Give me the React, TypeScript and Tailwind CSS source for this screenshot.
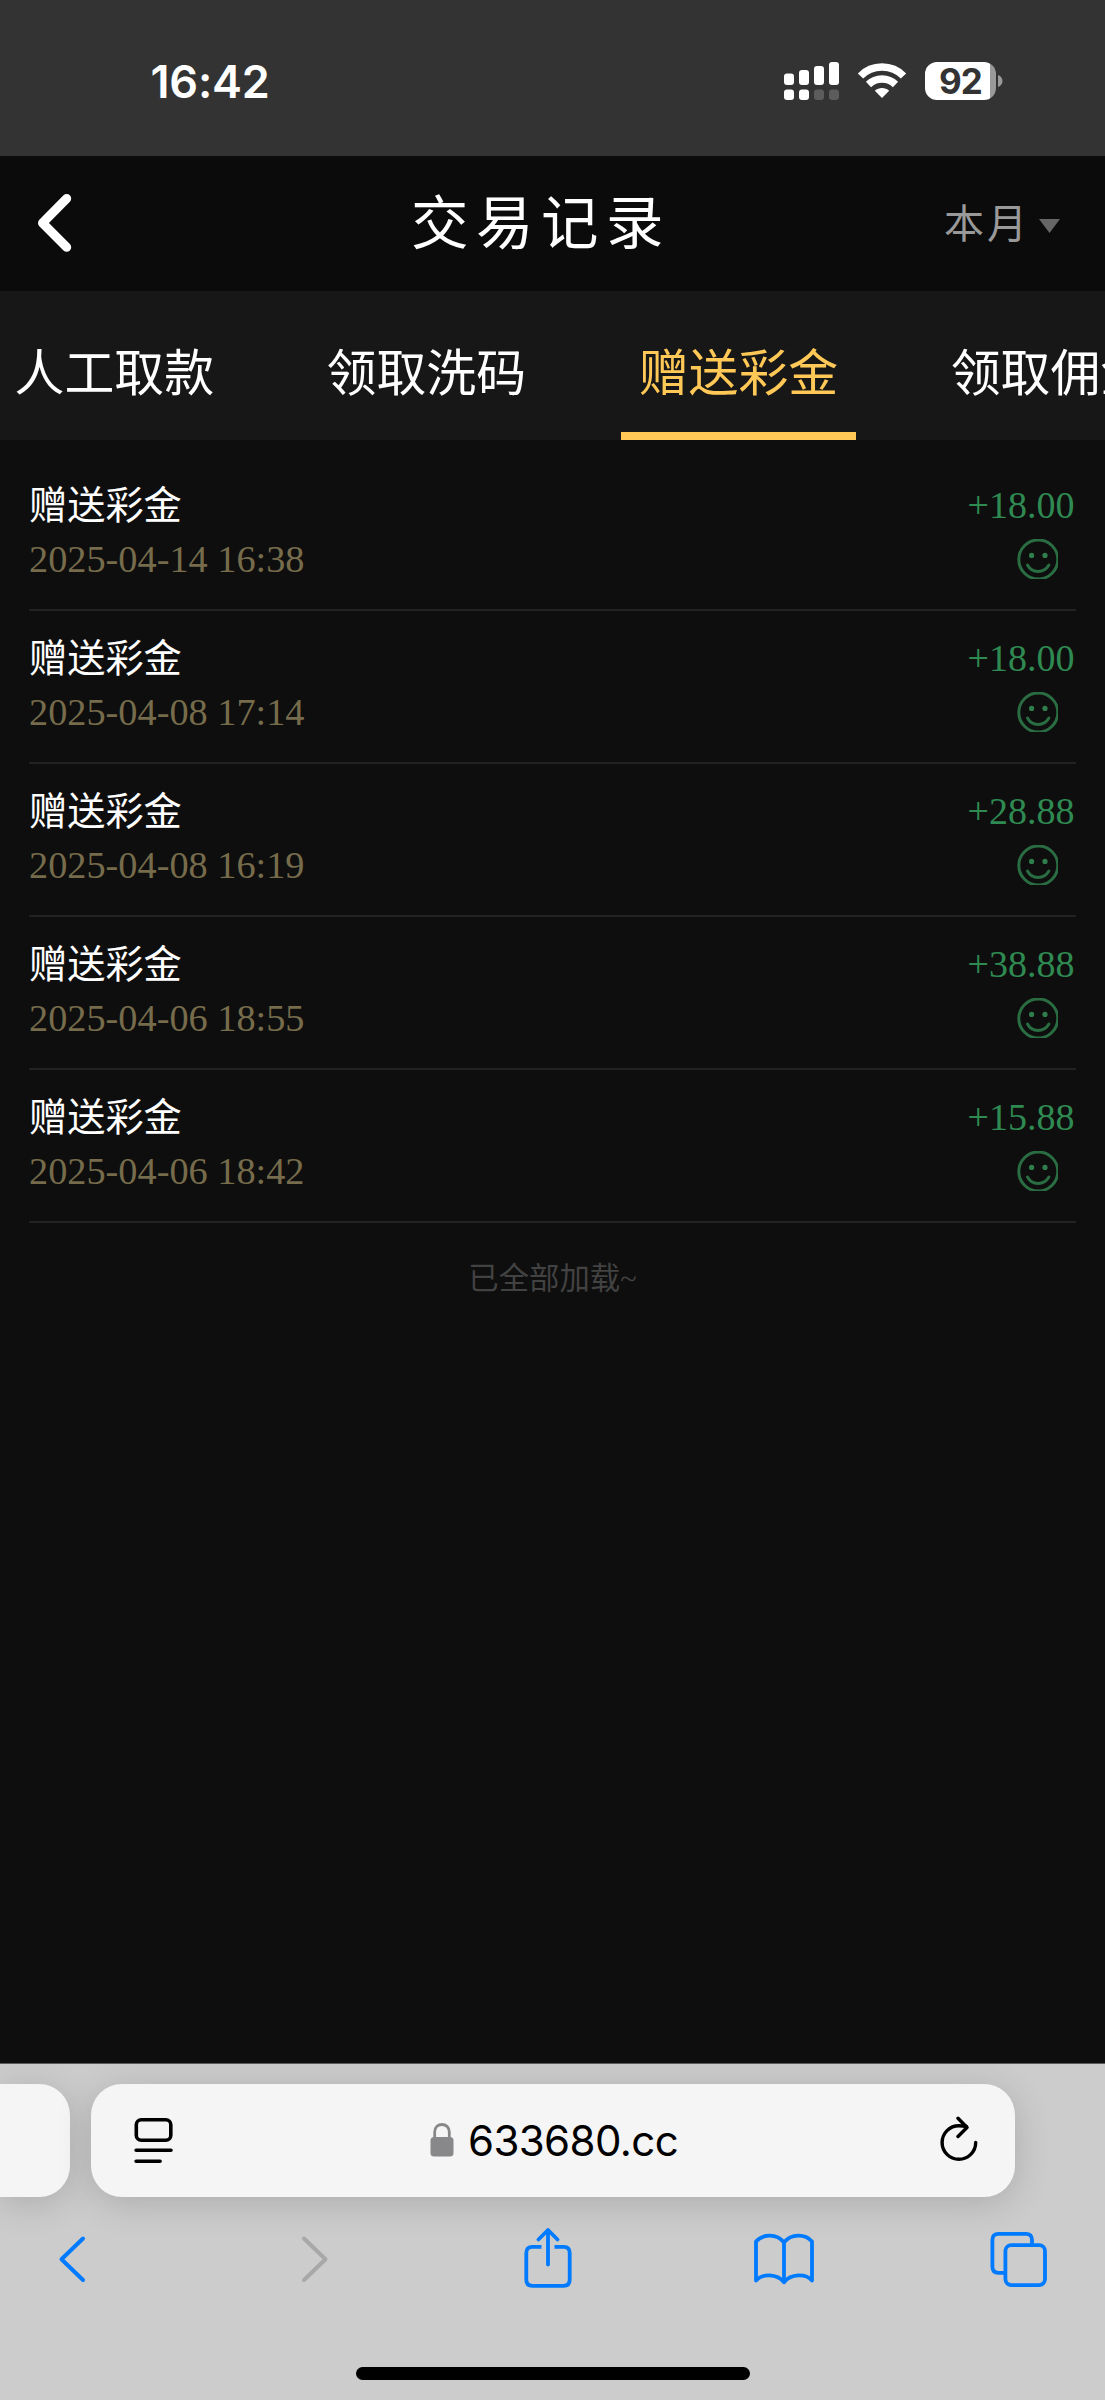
import React from 'react';

interface Transaction {
  title: string;
  time: string;
  amount: string;
}

const transactions: Transaction[] = [
  { title: '赠送彩金', time: '2025-04-14 16:38', amount: '+18.00' },
  { title: '赠送彩金', time: '2025-04-08 17:14', amount: '+18.00' },
  { title: '赠送彩金', time: '2025-04-08 16:19', amount: '+28.88' },
  { title: '赠送彩金', time: '2025-04-06 18:55', amount: '+38.88' },
  { title: '赠送彩金', time: '2025-04-06 18:42', amount: '+15.88' },
];

const tabs = ['人工取款', '领取洗码', '赠送彩金', '领取佣金'];
const activeTab = '赠送彩金';

const StatusBar: React.FC = () => (
  <div className="h-[155.5px] bg-[#333333] flex items-start justify-between pl-[150.5px] pr-[102px] font-['Inter',sans-serif] text-white">
    <div className="mt-[54px] text-[45px] leading-[56px] font-semibold tracking-[-0.2px]">16:42</div>
    <div className="mt-[62px] flex items-start">
      {/* Signal */}
      <svg className="w-[56px] h-[38px]" viewBox="0 0 56 38" fill="white">
        <rect x="0" y="11.5" width="10" height="11.5" rx="3" />
        <rect x="15" y="8" width="10" height="15" rx="3" />
        <rect x="30" y="4" width="10" height="19" rx="3" />
        <rect x="45" y="0" width="10" height="23" rx="3" />
        <rect x="0" y="27.5" width="10" height="10.5" rx="3" />
        <rect x="15" y="27.5" width="10" height="10.5" rx="3" />
        <rect x="30" y="27.5" width="10" height="10.5" rx="3" fill="#5c5c5c" />
        <rect x="45" y="27.5" width="10" height="10.5" rx="3" fill="#5c5c5c" />
      </svg>
      {/* Wifi */}
      <svg className="w-[50px] h-[38px] ml-[17px]" viewBox="0 0 50 38" fill="none" stroke="white" strokeWidth="7.4">
        <path d="M3.5 14C15 2 35 2 46.5 14" />
        <path d="M11.5 22.5C19 15.2 31 15.2 38.5 22.5" />
        <path d="M25 36l-7.2-7.3c4-3.6 10.4-3.6 14.4 0z" fill="white" stroke="none" />
      </svg>
      {/* Battery */}
      <div className="ml-[18px] flex items-center">
        <div className="w-[71px] h-[38px] rounded-[12px] bg-[linear-gradient(90deg,#fff_65px,#9a9a9a_65px)] text-[#333333] text-[35px] leading-[38px] font-bold text-center tracking-[-0.9px]">
          92
        </div>
        <svg className="w-[5px] h-[12px] ml-[2px]" viewBox="0 0 5 12" fill="#9a9a9a">
          <path d="M0 0c6 2 6 10 0 12z" />
        </svg>
      </div>
    </div>
  </div>
);

const Header: React.FC = () => (
  <div className="h-[135.5px] bg-[#0b0b0b] grid grid-cols-[1fr_auto_1fr] items-center">
    <svg className="w-[40px] h-[64px] ml-[35px]" viewBox="0 0 40 64" fill="none" stroke="white" strokeWidth="9" strokeLinecap="round" strokeLinejoin="round">
      <path d="M31.7 7.5L7.5 32l24.2 24.3" />
    </svg>
    <h1 className="text-[57.5px] leading-[80px] tracking-[7.5px] text-white whitespace-nowrap -mt-[8px] pr-[23px]">交易记录</h1>
    <div className="flex items-center justify-self-end pr-[45px]">
      <span className="-mt-[4px] text-[40px] leading-[56px] tracking-[3px] text-[#999999]">本月</span>
      <svg className="w-[21px] h-[14px] ml-[9px] mt-[5px]" viewBox="0 0 21 14" fill="#666666">
        <path d="M0 0h21L10.5 14z" />
      </svg>
    </div>
  </div>
);

const TabBar: React.FC = () => (
  <div className="h-[149px] bg-[#171717] flex pl-[14.5px] gap-[112.5px] overflow-hidden">
    {tabs.map((tab) => (
      <div
        key={tab}
        className={
          tab === activeTab
            ? 'shrink-0 h-full flex justify-center -mx-[18px] px-[18px] text-[#ffc857] border-b-[8.5px] border-[#ffc857]'
            : 'shrink-0 h-full flex justify-center text-white'
        }
      >
        <span className="mt-[42px] text-[49.9px] leading-[72px] whitespace-nowrap">{tab}</span>
      </div>
    ))}
  </div>
);

const Smile: React.FC = () => (
  <svg className="w-[42px] h-[40px] mt-[7px] mr-[18px]" viewBox="0 0 42 40" fill="none" stroke="#2a6d42" strokeWidth="3" strokeLinecap="round">
    <circle cx="22.3" cy="20.5" r="19.5" />
    <circle cx="15.6" cy="16.4" r="2.6" fill="#2f7f4c" stroke="none" />
    <circle cx="29" cy="16.4" r="2.6" fill="#2f7f4c" stroke="none" />
    <path d="M11.5 26c4.5 8.6 16.5 8.6 21.4 0" />
  </svg>
);

const TransactionRow: React.FC<{ item: Transaction }> = ({ item }) => (
  <div className="h-[153.1px] border-b-[2.5px] border-[#222222] flex justify-between pt-[20px]">
    <div className="font-['Liberation_Serif','Noto_Sans_CJK_SC',serif]">
      <div className="mt-px text-[38.2px] leading-[54px] text-white">{item.title}</div>
      <div className="-mt-[1.5px] text-[38.3px] leading-[54px] text-[#766c4c]">{item.time}</div>
    </div>
    <div className="flex flex-col items-end font-['Liberation_Serif',serif]">
      <div className="mr-[1.5px] text-[38px] leading-[54px] text-[#2f8a52]">{item.amount}</div>
      <Smile />
    </div>
  </div>
);

const BrowserBar: React.FC = () => (
  <div className="h-[337px] bg-[#cccccc] border-t border-[#5a5a5a] overflow-hidden flex flex-col">
    {/* Address bar */}
    <div className="flex shrink-0 mt-[19.5px] gap-[20.5px]">
      <div className="shrink-0 w-[70px] h-[113px] bg-[#f5f5f5] rounded-r-[31px] shadow-[0_6px_36px_rgba(0,0,0,0.16)]" />
      <div className="shrink-0 w-[924px] h-[113px] bg-[#f5f5f5] rounded-[31px] shadow-[0_6px_36px_rgba(0,0,0,0.16)] flex items-center justify-between pl-[43.5px] pr-[35.5px]">
        <svg className="w-[40px] h-[48px]" viewBox="0 0 40 48" fill="none" stroke="black" strokeWidth="3.6" strokeLinecap="round">
          <rect x="2.3" y="3.8" width="34.5" height="20.5" rx="5" />
          <path d="M2.1 34.3h34.9M2.1 45.3h24" />
        </svg>
        <div className="flex items-center mr-[5px]">
          <svg className="w-[24px] h-[34px] mr-[14px]" viewBox="0 0 24 34" fill="#88888b">
            <rect x="0.5" y="14" width="23" height="19.5" rx="3.5" />
            <path d="M4.7 15V9c0-10 14.6-10 14.6 0v6" fill="none" stroke="#88888b" strokeWidth="2.8" />
          </svg>
          <span className="mt-[2px] font-['Inter',sans-serif] text-[42px] leading-[56px] tracking-[-0.6px] text-black">633680.cc</span>
        </div>
        <svg className="w-[40px] h-[48px]" viewBox="0 0 40 48" fill="none" stroke="black" strokeWidth="3.4" strokeLinecap="round" strokeLinejoin="round">
          <path d="M36.7 26.5A16.8 16.8 0 1 1 19.9 9.7q4 0 7.5.8" />
          <path d="M19 2.2l9 9.3L19 20.5" />
        </svg>
      </div>
    </div>

    {/* Toolbar */}
    <div className="flex shrink-0 items-center mt-[29.5px] h-[66px] pl-[58px] text-[#007aff]">
      <svg className="shrink-0 w-[28px] h-[50px]" viewBox="0 0 28 50" fill="none" stroke="currentColor" strokeWidth="4" strokeLinecap="round" strokeLinejoin="round">
        <path d="M25 4.5L3.5 25.2 25 46" />
      </svg>
      <svg className="shrink-0 w-[28px] h-[50px] ml-[215px]" viewBox="0 0 28 50" fill="none" stroke="#a8a8a8" strokeWidth="4" strokeLinecap="round" strokeLinejoin="round">
        <path d="M3 4.5l21.5 20.7L3 46" />
      </svg>
      <svg className="shrink-0 w-[48px] h-[62px] ml-[194.5px]" viewBox="0 0 48 62" fill="none" stroke="currentColor" strokeWidth="3.8" strokeLinecap="round" strokeLinejoin="round">
        <path d="M17.5 18.8H8.3q-6 0-6 6v27q0 6 6 6h31.4q6 0 6-6v-27q0-6-6-6h-9.2" strokeLinecap="butt" />
        <path d="M24 36.5V2.5M14.5 11.5L24 2l9.5 9.5" />
      </svg>
      <svg className="shrink-0 w-[60px] h-[52px] ml-[182.3px]" viewBox="0 0 60 52" fill="none" stroke="currentColor" strokeWidth="3.8" strokeLinejoin="round">
        <path d="M30 9.5C23 .6 9 .6 2 8.5V47.5C8 40.5 23 40.5 30 49.3C37 40.5 52 40.5 58 47.5V8.5C51 .6 37 .6 30 9.5V49" />
      </svg>
      <svg className="shrink-0 w-[58px] h-[58px] ml-[176.6px]" viewBox="0 0 58 58" fill="none" stroke="currentColor" strokeWidth="3.8">
        <rect x="15.4" y="15.1" width="39.6" height="40" rx="6" />
        <path d="M42 15V9.8q0-6-6-6H8.4q-6 0-6 6v27q0 6 6 6h7" />
      </svg>
    </div>

    {/* Home indicator */}
    <div className="shrink-0 mx-auto mt-[75px] w-[394px] h-[13px] rounded-full bg-black" />
  </div>
);

const App: React.FC = () => {
  return (
    <div className="w-[1105px] h-[2400px] overflow-hidden bg-[#0e0e0e] flex flex-col font-['Noto_Sans_CJK_SC',sans-serif]">
      <StatusBar />
      <Header />
      <TabBar />

      {/* Transactions */}
      <main className="flex-1 px-[29px] pt-[18px]">
        {transactions.map((item) => (
          <TransactionRow key={item.time} item={item} />
        ))}
        <p className="mt-[33px] text-center font-['Liberation_Serif','Noto_Sans_CJK_SC',serif] text-[30.4px] leading-[46px] text-[#424242]">
          已全部加载~
        </p>
      </main>

      <BrowserBar />
    </div>
  );
};

export default App;
